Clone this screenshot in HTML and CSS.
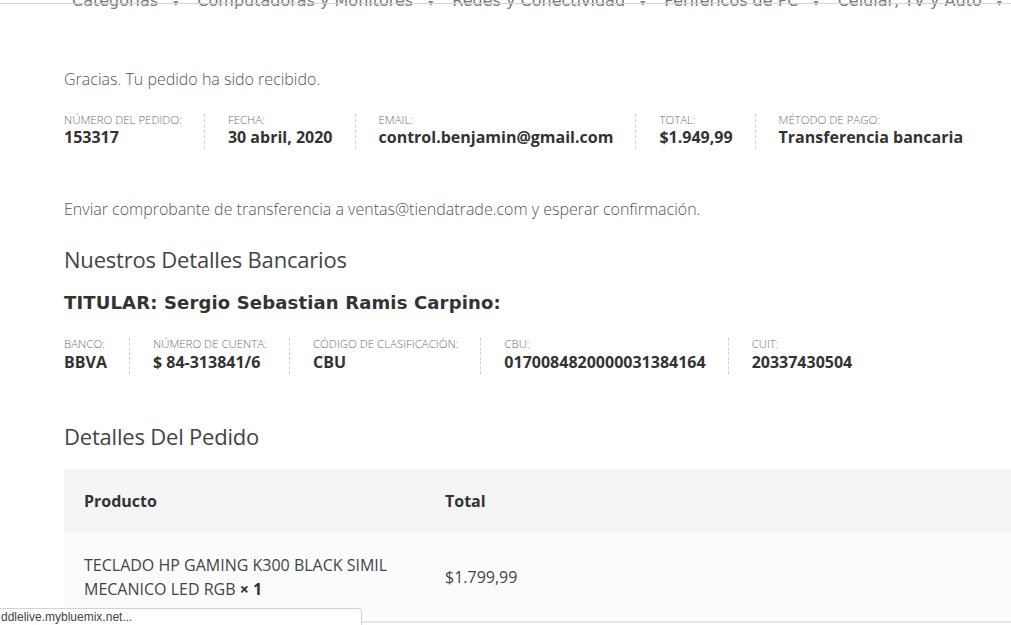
FILE: index.html
```html
<!DOCTYPE html>
<html lang="es">
<head>
<meta charset="utf-8">
<title>Pedido recibido</title>
<link rel="stylesheet" href="styles.css">
</head>
<body>
<div class="page">
  <nav class="topnav">
    <span class="nav-item">Categorías <span class="caret">▾</span></span>
    <span class="nav-item">Computadoras y Monitores <span class="caret">▾</span></span>
    <span class="nav-item">Redes y Conectividad <span class="caret">▾</span></span>
    <span class="nav-item">Periféricos de PC <span class="caret">▾</span></span>
    <span class="nav-item">Celular, TV y Auto <span class="caret">▾</span></span>
  </nav>

  <main class="content">
    <p class="thanks">Gracias. Tu pedido ha sido recibido.</p>

    <ul class="details">
      <li class="detail">Número del pedido: <strong>153317</strong></li>
      <li class="detail">Fecha: <strong>30 abril, 2020</strong></li>
      <li class="detail">Email: <strong>control.benjamin@gmail.com</strong></li>
      <li class="detail">Total: <strong>$1.949,99</strong></li>
      <li class="detail last">Método de pago: <strong>Transferencia bancaria</strong></li>
    </ul>

    <p class="instructions">Enviar comprobante de transferencia a ventas@tiendatrade.com y esperar confirmación.</p>

    <h2 class="section-title">Nuestros Detalles Bancarios</h2>
    <h3 class="holder">TITULAR: Sergio Sebastian Ramis Carpino:</h3>

    <ul class="details bank">
      <li class="detail">Banco: <strong>BBVA</strong></li>
      <li class="detail">Número de cuenta: <strong>$ 84-313841/6</strong></li>
      <li class="detail">Código de clasificación: <strong>CBU</strong></li>
      <li class="detail">CBU: <strong>0170084820000031384164</strong></li>
      <li class="detail last">CUIT: <strong>20337430504</strong></li>
    </ul>

    <h2 class="section-title order-title">Detalles Del Pedido</h2>

    <table class="order-table">
      <colgroup>
        <col class="col-product-w">
        <col>
      </colgroup>
      <thead>
        <tr><th>Producto</th><th>Total</th></tr>
      </thead>
      <tbody>
        <tr>
          <td class="product-cell">TECLADO HP GAMING K300 BLACK SIMIL MECANICO LED RGB <strong class="qty">× 1</strong></td>
          <td>$1.799,99</td>
        </tr>
      </tbody>
    </table>
  </main>
</div>
<div class="status-bubble">ddlelive.mybluemix.net...</div>
</body>
</html>
```
FILE: styles.css
```css
html, body {
  margin: 0;
  padding: 0;
  background: #ffffff;
  overflow: hidden;
}

body {
  font-family: "Open Sans", "Liberation Sans", sans-serif;
  color: #555555;
  width: 1011px;
  height: 625px;
}

.page {
  width: 1200px;
}

.topnav {
  display: flex;
  padding-left: 72px;
  margin-top: -10px;
  height: 22px;
  font-family: "DejaVu Sans", sans-serif;
  font-size: 16px;
  line-height: 22px;
  color: #7a7a7a;
  position: relative;
}

.topnav::after {
  content: "";
  position: absolute;
  left: 0;
  right: 0;
  top: 13px;
  height: 1px;
  background: #d6d6d6;
}

.nav-item {
  margin-right: 19px;
  white-space: nowrap;
}

.caret {
  font-size: 10px;
  margin-left: 10px;
  color: #888;
}

.content {
  padding: 55px 0 0 64px;
}

.thanks {
  margin: 0;
  font-size: 16px;
  line-height: 24px;
  font-weight: 300;
  color: #555;
}

.details {
  list-style: none;
  margin: 23px 0 0 0;
  padding: 0;
  display: flex;
}

.detail {
  font-size: 11.44px;
  line-height: 1;
  text-transform: uppercase;
  font-weight: 300;
  color: #6f6f6f;
  padding-right: 22px;
  margin-right: 23px;
  border-right: 1px dashed #cfcfcf;
  white-space: nowrap;
}

.detail.last {
  border-right: 0;
}

.detail strong {
  display: block;
  font-size: 16px;
  line-height: 24px;
  font-weight: 700;
  text-transform: none;
  color: #333;
}

.instructions {
  margin: 48px 0 0 0;
  font-size: 16px;
  line-height: 24px;
  font-weight: 300;
  color: #555;
}

.section-title {
  margin: 23px 0 0 0;
  font-size: 22px;
  line-height: 30px;
  font-weight: 400;
  color: #444;
  letter-spacing: -0.2px;
}

.holder {
  margin: 16px 0 0 0;
  font-family: "DejaVu Sans", sans-serif;
  font-size: 18px;
  line-height: 26px;
  font-weight: 700;
  letter-spacing: 0.15px;
  color: #333;
}

.bank {
  margin-top: 22px;
}

.order-title {
  margin-top: 47px;
}

.order-table {
  margin-top: 18px;
  border-collapse: collapse;
  table-layout: fixed;
  width: 1136px;
}

.col-product-w {
  width: 361px;
}

.order-table th {
  background: #f5f5f5;
  height: 64px;
  padding: 0 20px;
  text-align: left;
  font-size: 16px;
  font-weight: 700;
  color: #333;
}

.order-table td {
  background: #fcfcfc;
  height: 88px;
  padding: 0 20px;
  font-size: 16px;
  line-height: 24px;
  color: #444;
  border-bottom: 2px solid #e6e6e6;
  vertical-align: middle;
}

.qty {
  font-weight: 700;
  color: #333;
}

.status-bubble {
  position: fixed;
  left: -1px;
  bottom: -2px;
  width: 360px;
  height: 17px;
  background: #ffffff;
  border: 1px solid #d2d2d2;
  border-top-right-radius: 4px;
  font-family: "Liberation Sans", sans-serif;
  font-size: 12px;
  line-height: 17px;
  color: #444;
  padding-left: 1px;
  white-space: nowrap;
  overflow: hidden;
}
```
